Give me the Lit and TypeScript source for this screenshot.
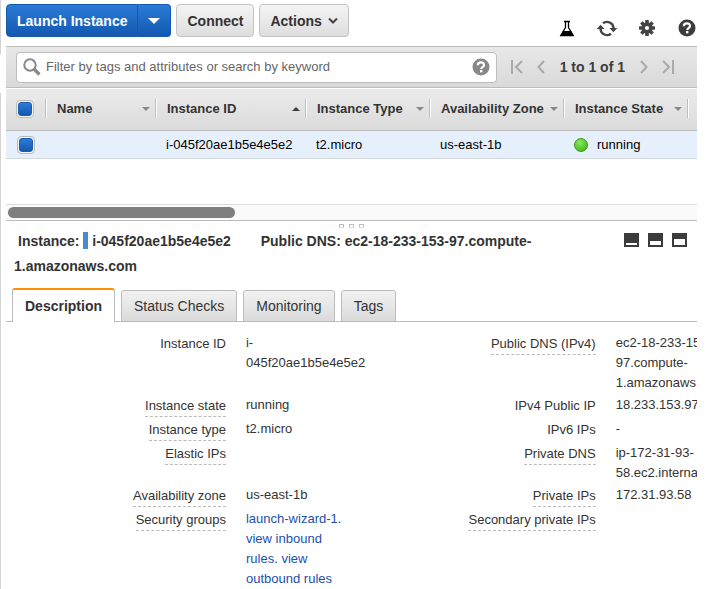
import { LitElement, html, css, svg, nothing } from "lit";
import { customElement, state } from "lit/decorators.js";
import { classMap } from "lit/directives/class-map.js";

interface Field {
  label: string;
  hint?: boolean;
  value?: unknown;
}

const helpIcon = html`<svg class="help-icon" viewBox="0 0 18 18" aria-hidden="true">
  <circle cx="9" cy="9" r="8.5" fill="currentColor" />
  <path d="M5.8 7.2C5.8 3.4 12 3.5 12 6.9c0 2.1-2.7 2.1-2.7 4" fill="none" stroke="#fff" stroke-width="2.2" />
  <rect x="8" y="12" width="2.4" height="2.4" fill="#fff" />
</svg>`;

const flaskIcon = html`<svg width="16" height="18" viewBox="0 0 16 18" aria-hidden="true">
  <path d="M5 2.5h6M6.5 2.5v6L1.8 16.5h12.4L9.5 8.5v-6" fill="none" stroke="#000" stroke-width="1.3" />
  <path d="M4 12h8l3 5H1z" fill="#000" />
</svg>`;

const refreshIcon = html`<svg width="22" height="18" viewBox="0 0 22 18" aria-hidden="true">
  <path
    d="M7 4.3A6.5 6.5 0 0 1 17.5 9M15 14.7A6.5 6.5 0 0 1 4.5 10"
    fill="none"
    stroke="#444"
    stroke-width="2.4"
  />
  <path d="M13.4 9h8l-4 4.3zM.6 10h8l-4-4.3z" fill="#444" />
</svg>`;

const gearIcon = html`<svg width="16" height="16" viewBox="0 0 16 16" aria-hidden="true">
  <g fill="#444">
    ${[0, 45, 90, 135].map(
      (a) => svg`<rect x="6.2" y="0" width="3.6" height="16" rx="0.5" transform="rotate(${a} 8 8)" />`
    )}
    <circle cx="8" cy="8" r="5.7" />
  </g>
  <circle cx="8" cy="8" r="2.1" fill="#fff" />
</svg>`;

const pagerIcon = (path: string, width: number) => html`<svg
  width=${width}
  height="14"
  viewBox="0 0 ${width} 14"
  aria-hidden="true"
>
  <path d=${path} fill="none" stroke="currentColor" stroke-width="2" />
</svg>`;

const paneIcon = (top: number) => html`<svg width="15" height="14" viewBox="0 0 15 14" aria-hidden="true">
  <rect width="15" height="14" fill="#3c3c3c" />
  <rect x="2" y=${top} width="11" height=${12 - top} fill="#fff" />
</svg>`;

@customElement("app-root")
export class AppRoot extends LitElement {
  @state() private tab = "Description";

  private columns = [
    { name: "Name", cls: "c-name", asc: false },
    { name: "Instance ID", cls: "c-id", asc: true },
    { name: "Instance Type", cls: "c-type", asc: false },
    { name: "Availability Zone", cls: "c-zone", asc: false },
    { name: "Instance State", cls: "c-state", asc: false },
  ];

  private rows: [Field, Field][] = [
    [
      { label: "Instance ID", value: html`i-<wbr />045f20ae1b5e4e5e2` },
      {
        label: "Public DNS (IPv4)",
        hint: true,
        value: html`ec2-18-233-153-<wbr />97.compute-<wbr />1.amazonaws.com`,
      },
    ],
    [
      { label: "Instance state", hint: true, value: "running" },
      { label: "IPv4 Public IP", value: "18.233.153.97" },
    ],
    [
      { label: "Instance type", hint: true, value: "t2.micro" },
      { label: "IPv6 IPs", value: "-" },
    ],
    [
      { label: "Elastic IPs", hint: true },
      { label: "Private DNS", hint: true, value: html`ip-172-31-93-<wbr />58.ec2.internal` },
    ],
    [
      { label: "Availability zone", hint: true, value: "us-east-1b" },
      { label: "Private IPs", hint: true, value: "172.31.93.58" },
    ],
    [
      {
        label: "Security groups",
        hint: true,
        value: html`<a href="#group">launch-wizard-1</a>. <a href="#inbound">view inbound rules</a>.
          <a href="#outbound">view outbound rules</a>`,
      },
      { label: "Secondary private IPs", hint: true },
    ],
  ];

  static styles = css`
    :host {
      display: flex;
      min-height: 100vh;
      box-sizing: border-box;
      padding-right: 14px;
      background: #fff;
      color: #333;
      font: 13px/20px "Liberation Sans", Arial, sans-serif;
    }
    * {
      box-sizing: border-box;
    }
    button,
    input {
      font: inherit;
      color: inherit;
      margin: 0;
    }
    button {
      padding: 0;
      border: 0;
      background: none;
    }
    svg {
      display: block;
      flex: none;
    }
    .rail {
      flex: none;
      display: flex;
      flex-direction: column;
      gap: 39px;
      width: 1px;
      margin-right: 5px;
    }
    .rail-top {
      height: 54px;
      background: #d4d4d4;
    }
    .rail-rest {
      flex: 1;
      background: #d4d4d4;
    }
    .main {
      flex: 1;
      min-width: 0;
    }

    .actions {
      display: flex;
      gap: 5px;
      padding: 4px 0 9px;
    }
    .btn {
      height: 33px;
      padding: 0 10px;
      border: 1px solid #c3c3c3;
      border-radius: 4px;
      background: linear-gradient(#f4f4f4, #dedede);
      font-size: 14px;
      font-weight: bold;
      white-space: nowrap;
    }
    .menu {
      display: flex;
      align-items: center;
      gap: 6px;
    }
    .split {
      display: flex;
    }
    .primary {
      border-color: #1459ad;
      background: linear-gradient(#2b7bd7, #1359b0);
      color: #fff;
    }
    .split .primary:first-child {
      border-radius: 4px 0 0 4px;
    }
    .split .primary:last-child {
      border-left: 0;
      border-radius: 0 4px 4px 0;
    }
    .tools {
      display: flex;
      gap: 20px;
      margin: 14px 0 0 auto;
      height: 18px;
    }
    .tool {
      display: flex;
      align-items: center;
      justify-content: center;
      width: 20px;
      height: 20px;
      color: #3c3c3c;
    }
    .help-icon {
      width: 18px;
      height: 18px;
    }

    .filter {
      display: flex;
      align-items: center;
      height: 42px;
      padding: 0 23px 0 10px;
      border-top: 1px solid #bcbcbc;
      border-bottom: 1px solid #bcbcbc;
      background: linear-gradient(#e8e8e8, #d9d9d9);
    }
    .search {
      flex: 1;
      display: flex;
      align-items: center;
      gap: 5px;
      min-width: 0;
      height: 31px;
      padding: 0 6px;
      border: 1px solid #bdbdbd;
      border-radius: 4px;
      background: #fff;
    }
    .search input {
      flex: 1;
      min-width: 0;
      padding: 0;
      border: 0;
      outline: 0;
      background: none;
    }
    .search input::placeholder {
      color: #666;
      opacity: 1;
    }
    .search button {
      color: #888;
    }
    .pager {
      display: flex;
      align-items: center;
      gap: 14px;
      margin-left: 14px;
      color: #aaa;
    }
    .count {
      font-size: 14px;
      font-weight: bold;
      color: #3c3c3c;
      white-space: nowrap;
      margin: 0 1px;
    }

    .grid {
      min-height: 115px;
      margin-top: 1px;
      overflow: hidden;
    }
    table {
      width: 100%;
      table-layout: fixed;
      border-collapse: separate;
      border-spacing: 0;
    }
    .c-check {
      width: 41px;
    }
    .c-name {
      width: 110px;
    }
    .c-id {
      width: 150px;
    }
    .c-type {
      width: 124px;
    }
    .c-zone {
      width: 134px;
    }
    .c-state {
      width: 124px;
    }
    th {
      height: 42px;
      padding: 0 0 2px;
      border-bottom: 1px solid #bcbcbc;
      text-align: left;
    }
    thead {
      background: linear-gradient(#ebebeb, #dadada);
    }
    .head {
      display: flex;
      align-items: center;
      justify-content: space-between;
      height: 19px;
      padding: 0 6px 0 10px;
      border-right: 1px solid #fff;
      box-shadow: inset -1px 0 #c0c0c0;
      white-space: nowrap;
    }
    .arrow {
      border: 4px solid transparent;
      border-top-color: #888;
      border-bottom: 0;
    }
    .arrow.asc {
      border-top: 0;
      border-bottom: 4px solid #3c3c3c;
    }
    td {
      height: 28px;
      padding: 0 9px;
      border-bottom: 1px solid #d4d9de;
      background: #e6f0fc;
      color: #000;
      white-space: nowrap;
    }
    td:first-child {
      padding: 0 11px;
    }
    .check {
      appearance: none;
      flex: none;
      display: block;
      width: 18px;
      height: 18px;
      padding: 1px;
      border: 1px solid #bbb;
      border-radius: 4px;
      background: #f4f4f4;
    }
    .check:checked::before {
      content: "";
      display: block;
      box-sizing: border-box;
      height: 14px;
      border: 1px solid #1b5fb4;
      border-radius: 3px;
      background: linear-gradient(#2b7bd7, #1359b0);
    }
    .state {
      display: flex;
      align-items: center;
      gap: 9px;
    }
    .dot {
      width: 14px;
      height: 14px;
      border: 1px solid #3c9a1c;
      border-radius: 50%;
      background: radial-gradient(circle at 40% 30%, #8be65c, #35b011);
    }
    .scroll {
      height: 17px;
      padding: 2px;
      border-top: 1px solid #dcdcdc;
      border-bottom: 1px solid #bcbcbc;
      background: #fafafa;
    }
    .thumb {
      width: 33%;
      height: 11px;
      border-radius: 6px;
      background: #7f7f7f;
    }
    .splitter {
      display: flex;
      justify-content: center;
      gap: 5px;
      height: 8px;
      padding-top: 3px;
    }
    .grip {
      width: 5px;
      height: 4px;
      border: 1px solid #bbb;
      border-bottom-color: #ddd;
      border-radius: 1px;
    }

    .summary {
      display: flex;
      padding: 0 10px 9px 8px;
    }
    .summary h2 {
      flex: 1;
      margin: 0;
      font-size: 14px;
      line-height: 25px;
    }
    .who {
      margin: 0 26px 0 4px;
    }
    .mark {
      display: inline-block;
      width: 5px;
      height: 17px;
      vertical-align: text-bottom;
      background: #4a8acb;
    }
    .panes {
      display: flex;
      gap: 9px;
      padding-top: 4px;
      height: 18px;
    }

    .tabs {
      display: flex;
      align-items: flex-end;
      gap: 6px;
      padding-left: 6px;
      height: 34px;
      box-shadow: inset 0 -1px #bcbcbc;
    }
    .tab {
      height: 32px;
      padding: 0 12px;
      border: 1px solid #bcbcbc;
      border-radius: 3px 3px 0 0;
      background: linear-gradient(#f2f2f2, #dadada);
      font-size: 14px;
      white-space: nowrap;
    }
    .tab.active {
      height: 34px;
      border-top: 2px solid #ff9000;
      border-bottom: 0;
      background: #fff;
      font-weight: bold;
    }

    .details {
      overflow: hidden;
      padding-top: 10px;
    }
    .fields {
      display: grid;
      grid-template-columns: 219fr 149fr 219fr 149fr;
      width: 107%;
      margin: 0;
    }
    dt {
      padding-top: 2px;
      height: 24px;
      text-align: right;
      white-space: nowrap;
    }
    .term {
      display: inline-block;
    }
    .term.hint {
      border-bottom: 1px dashed #bbb;
    }
    dd {
      min-width: 0;
      margin: 0;
      padding: 1px 30px 1px 20px;
    }
    a {
      color: #1a50ad;
      text-decoration: none;
    }
  `;

  private field(f: Field) {
    return html`<dt><span class=${classMap({ term: true, hint: !!f.hint })}>${f.label}</span></dt>
      <dd>${f.value ?? nothing}</dd>`;
  }

  render() {
    return html`
      <div class="rail"><div class="rail-top"></div><div class="rail-rest"></div></div>
      <main class="main">
        <header class="actions">
          <div class="split">
            <button class="btn primary">Launch Instance</button>
            <button class="btn primary" aria-label="More launch options">
              <svg width="12" height="6" viewBox="0 0 12 6"><path d="M0 0h12L6 6z" fill="#fff" /></svg>
            </button>
          </div>
          <button class="btn">Connect</button>
          <button class="btn menu">
            Actions
            <svg width="10" height="8" viewBox="0 0 10 8">
              <path d="M1 1.5l4 4 4-4" fill="none" stroke="#444" stroke-width="2" />
            </svg>
          </button>
          <div class="tools">
            <button class="tool" aria-label="Experiments">${flaskIcon}</button>
            <button class="tool" aria-label="Refresh">${refreshIcon}</button>
            <button class="tool" aria-label="Settings">${gearIcon}</button>
            <button class="tool" aria-label="Help">${helpIcon}</button>
          </div>
        </header>

        <div class="filter">
          <div class="search">
            <svg width="18" height="18" viewBox="0 0 18 18" aria-hidden="true">
              <circle cx="7" cy="7" r="5.7" fill="none" stroke="#888" stroke-width="2" />
              <path d="M11 11l5.5 5.5" stroke="#888" stroke-width="3.2" />
            </svg>
            <input
              type="text"
              aria-label="Filter instances"
              placeholder="Filter by tags and attributes or search by keyword"
            />
            <button aria-label="Search help">${helpIcon}</button>
          </div>
          <nav class="pager" aria-label="Pages">
            <button aria-label="First page">${pagerIcon("M1 0v14M11 1L5 7l6 6", 12)}</button>
            <button aria-label="Previous page">${pagerIcon("M7 1L1.5 7 7 13", 8)}</button>
            <span class="count">1 to 1 of 1</span>
            <button aria-label="Next page">${pagerIcon("M1 1l5.5 6L1 13", 8)}</button>
            <button aria-label="Last page">${pagerIcon("M1 1l6 6-6 6M11 0v14", 12)}</button>
          </nav>
        </div>

        <div class="grid">
          <table>
            <thead>
              <tr>
                <th class="c-check">
                  <div class="head"><input class="check" type="checkbox" aria-label="Select all" checked /></div>
                </th>
                ${this.columns.map(
                  (c) => html`<th class=${c.cls}>
                    <div class="head">${c.name}<span class=${classMap({ arrow: true, asc: c.asc })}></span></div>
                  </th>`
                )}
                <th></th>
              </tr>
            </thead>
            <tbody>
              <tr>
                <td><input class="check" type="checkbox" aria-label="Select i-045f20ae1b5e4e5e2" checked /></td>
                <td></td>
                <td>i-045f20ae1b5e4e5e2</td>
                <td>t2.micro</td>
                <td>us-east-1b</td>
                <td><div class="state"><span class="dot"></span>running</div></td>
                <td></td>
              </tr>
            </tbody>
          </table>
        </div>
        <div class="scroll"><div class="thumb"></div></div>
        <div class="splitter"><span class="grip"></span><span class="grip"></span><span class="grip"></span></div>

        <section class="summary">
          <h2>
            <span class="who">Instance: <span class="mark"></span> i-045f20ae1b5e4e5e2</span>
            Public DNS: ec2-18-233-153-97.compute-<wbr />1.amazonaws.com
          </h2>
          <div class="panes">
            <button aria-label="Minimise details">${paneIcon(10)}</button>
            <button aria-label="Split view">${paneIcon(8)}</button>
            <button aria-label="Maximise details">${paneIcon(6)}</button>
          </div>
        </section>

        <div class="tabs" role="tablist">
          ${["Description", "Status Checks", "Monitoring", "Tags"].map(
            (t) => html`<button
              role="tab"
              aria-selected=${t === this.tab}
              class=${classMap({ tab: true, active: t === this.tab })}
              @click=${() => (this.tab = t)}
            >
              ${t}
            </button>`
          )}
        </div>
        <div class="details" role="tabpanel">
          <dl class="fields">${this.rows.map(([a, b]) => [this.field(a), this.field(b)])}</dl>
        </div>
      </main>
    `;
  }
}
